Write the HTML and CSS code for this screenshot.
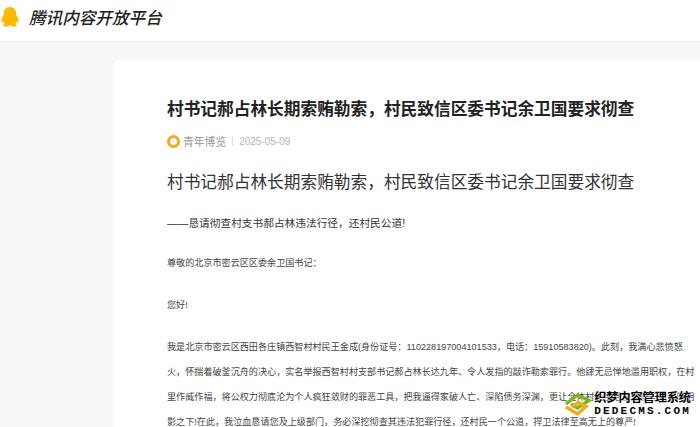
FILE: index.html
```html
<!DOCTYPE html>
<html lang="zh-CN">
<head>
    <meta charset="UTF-8">
    <meta name="viewport" content="width=device-width, initial-scale=1.0">
    <title>腾讯内容开放平台</title>
    <link rel="stylesheet" href="styles.css">
</head>
<body>

    <header class="top-bar">
        <svg class="qq-logo" width="18" height="20" viewBox="0 0 18 20">
            <path fill="#ffb900" d="M9 0C5 0 3.100 2.900 2.900 6.200 2.800 7.600 2.400 8.400 1.600 9.800.6 11.700.1 13.800.5 15.200c.3.700 1 .1 1.600-1 .3 1.100.9 2 1.700 2.700-1 .4-1.700 1-1.600 1.700C2.400 19.500 4 19.800 5.600 19.600c1.200-.2 2.200-.6 2.700-1.100h1.400c.5.500 1.500.9 2.700 1.100 1.600.2 3.200-.1 3.400-1 .1-.7-.6-1.300-1.600-1.700.8-.7 1.400-1.600 1.700-2.700.6 1.100 1.300 1.700 1.600 1 .4-1.400-.1-3.500-1.100-5.400-.8-1.400-1.200-2.200-1.300-3.600C14.900 2.900 13 0 9 0z"/>
        </svg>
        <span class="brand">腾讯内容开放平台</span>
    </header>

    <main class="page">
        <article class="card">
            <h1 class="title">村书记郝占林长期索贿勒索，村民致信区委书记余卫国要求彻查</h1>
            <div class="meta">
                <span class="avatar"></span>
                <span class="author">青年博览</span>
                <span class="divider"></span>
                <span class="date">2025-05-09</span>
            </div>
            <h2 class="headline">村书记郝占林长期索贿勒索，村民致信区委书记余卫国要求彻查</h2>
            <p class="subhead">——恳请彻查村支书郝占林违法行径，还村民公道!</p>
            <p class="text">尊敬的北京市密云区区委余卫国书记：</p>
            <p class="text greeting">您好!</p>
            <p class="text body-text">我是北京市密云区西田各庄镇西智村村民王金成(身份证号：110228197004101533，电话：15910583820)。此刻，我满心悲愤怒<br>火，怀揣着破釜沉舟的决心，实名举报西智村村支部书记郝占林长达九年、令人发指的敲诈勒索罪行。他肆无忌惮地滥用职权，在村<br>里作威作福，将公权力彻底沦为个人疯狂敛财的罪恶工具，把我逼得家破人亡、深陷债务深渊，更让全体村民生活在恐惧与绝望的阴<br>影之下!在此，我泣血恳请您及上级部门，务必深挖彻查其违法犯罪行径，还村民一个公道，捍卫法律至高无上的尊严!</p>
        </article>
    </main>

    <div class="watermark">
        <svg class="wm-logo" width="29" height="25" viewBox="0 0 29 25">
            <path fill="none" stroke="#7cb518" stroke-width="3.400" d="M3 12 14.500 3 26 8.500 14.500 16 8 12"/>
            <path fill="none" stroke="#f5a81c" stroke-width="3.400" d="M9 15 15 10.500 23 14.500 14.500 22 3 15"/>
        </svg>
        <div class="wm-text">
            <div class="wm-cn">织梦内容管理系统</div>
            <div class="wm-en">DEDECMS.COM</div>
        </div>
    </div>

</body>
</html>
```

FILE: styles.css
```css
html, body { height: 427px; overflow: hidden; }
body { margin: 0; background: #f6f7f7; font-family: "Liberation Sans", "Noto Sans CJK SC", sans-serif; position: relative; }

.top-bar { height: 34px; padding: 0 0 7px 1px; background: #fff; border-bottom: 1px solid #ececec; display: flex; align-items: center; }
.qq-logo { margin-right: 10px; }
.brand { font-size: 16.6px; font-style: italic; font-weight: 500; color: #222; }

.page { padding: 18px 0 0 113px; }
.card { background: #fff; border-radius: 6px 0 0 0; padding: 38px 0 0 54px; height: 329px; overflow: hidden; }

.title { margin: 0; font-size: 16.7px; line-height: 24px; font-weight: 700; color: #222; }
.meta { display: flex; align-items: center; margin-top: 11px; height: 16px; font-size: 10px; color: #b5b5b5; }
.avatar { width: 13px; height: 13px; box-sizing: border-box; border: 3px solid #f5a623; border-radius: 50%; margin-right: 3px; }
.author { font-size: 10.8px; color: #999; }
.divider { width: 1px; height: 9px; background: #ddd; margin: 0 6px; }

.headline { margin: 22px 0 0; font-size: 16.7px; line-height: 24px; font-weight: 400; color: #333; }
.subhead { margin: 19px 0 0; font-size: 10.7px; line-height: 18px; color: #333; }
.text { margin: 22px 0 0; font-size: 9.1px; line-height: 18px; color: #444; white-space: nowrap; }
.greeting { margin-top: 24px; }
.body-text { margin-top: 21px; line-height: 25px; }

.watermark { position: absolute; right: 9px; bottom: 10px; display: flex; align-items: center; }
.wm-text { margin-left: 2px; color: #000; text-shadow: 0 0 2px #fff, 0 0 2px #fff; }
.wm-cn { font-size: 12.1px; line-height: 14px; font-weight: 700; white-space: nowrap; }
.wm-en { font-family: "Liberation Mono", monospace; font-size: 11px; line-height: 11px; font-weight: 700; letter-spacing: 2.2px; white-space: nowrap; margin-top: 1px; }
```
